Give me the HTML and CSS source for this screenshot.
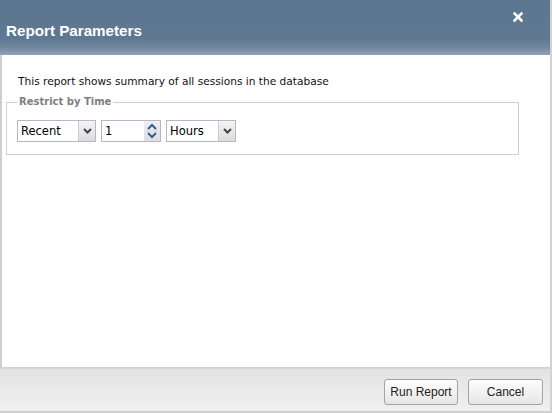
FILE: index.html
```html
<!DOCTYPE html>
<html>
<head>
<meta charset="utf-8">
<link rel="stylesheet" href="styles.css">
</head>
<body>
<div class="dialog">
  <div class="header">
    <span class="title">Report Parameters</span>
    <span class="close"><svg width="10" height="10" viewBox="0 0 10 10"><path d="M1.5 1.5 L8.5 8.5 M8.5 1.5 L1.5 8.5" stroke="#fff" stroke-width="2.6" stroke-linecap="square"/></svg></span>
  </div>
  <div class="body">
    <p class="desc">This report shows summary of all sessions in the database</p>
    <fieldset class="group">
      <legend>Restrict by Time</legend>
      <div class="controls">
        <div class="combo w-recent"><span class="val">Recent</span><span class="trigger"><svg width="9" height="6" viewBox="0 0 9 6"><path d="M1 1 L4.5 4.5 L8 1" fill="none" stroke="#444" stroke-width="2"/></svg></span></div>
        <div class="combo w-num"><span class="val">1</span><span class="spin"><svg width="14" height="20" viewBox="0 0 14 20"><path d="M3 8 L7 4 L11 8" fill="none" stroke="#2f5f95" stroke-width="2"/><path d="M3 12 L7 16 L11 12" fill="none" stroke="#2f5f95" stroke-width="2"/><path d="M1 10 H13" stroke="#d8dce4" stroke-width="1"/></svg></span></div>
        <div class="combo w-hours"><span class="val">Hours</span><span class="trigger"><svg width="9" height="6" viewBox="0 0 9 6"><path d="M1 1 L4.5 4.5 L8 1" fill="none" stroke="#444" stroke-width="2"/></svg></span></div>
      </div>
    </fieldset>
  </div>
  <div class="footer">
    <button class="btn btn-run">Run Report</button>
    <button class="btn btn-cancel">Cancel</button>
  </div>
</div>
</body>
</html>
```
FILE: styles.css
```css
html, body { margin: 0; padding: 0; background: #fff; }
.dialog {
  width: 550px;
  height: 411px;
  display: flex;
  flex-direction: column;
  border-right: 2px solid #d2d2d2;
  border-bottom: 2px solid #cfcfcf;
  font-family: "DejaVu Sans", Tahoma, sans-serif;
}
.header {
  height: 55px;
  flex: none;
  position: relative;
  background: linear-gradient(to bottom, #5d7790 0, #5e7891 38px, #6e869c 47px, #90a3b4 55px);
  display: flex;
  align-items: center;
  padding-left: 6px;
  padding-top: 5px;
  box-sizing: border-box;
}
.title {
  color: #fff;
  font-family: "Liberation Sans", Arial, sans-serif;
  font-weight: bold;
  font-size: 15.2px;
}
.close {
  position: absolute;
  right: 27px;
  top: 12px;
  width: 10px;
  height: 10px;
  display: flex;
}
.body {
  flex: 1;
  border-left: 2px solid #cfcfcf;
  border-bottom: 1px solid #d0d0d0;
  padding: 19px 0 0 4px;
}
.desc {
  margin: 0 0 0 12px;
  font-size: 10.6px;
  line-height: 14px;
  color: #111;
}
.group {
  margin: 7px 0 0 0;
  width: 513px;
  box-sizing: border-box;
  border: 1px solid #cfcfcf;
  padding: 11px 10px 12px 10px;
}
.group legend {
  margin-left: 0;
  padding: 0 2px;
  font-size: 10px;
  font-weight: bold;
  color: #7e7e7e;
  line-height: 14px;
}
.controls {
  display: flex;
  gap: 5px;
}
.combo {
  height: 22px;
  box-sizing: border-box;
  border: 1px solid #b5b8c8;
  background: #fff;
  display: flex;
  align-items: center;
  font-size: 11.5px;
  color: #000;
}
.val { flex: 1; padding-left: 3px; }
.w-recent { width: 79px; }
.w-num { width: 60px; }
.w-hours { width: 70px; }
.trigger {
  width: 16px;
  height: 100%;
  border-left: 1px solid #c9cbd6;
  background: linear-gradient(to bottom, #f4f4f4, #dcdcdc);
  display: flex;
  align-items: center;
  justify-content: center;
}
.spin {
  width: 16px;
  height: 100%;
  background: linear-gradient(to bottom, #f0f0f0, #dedede);
  display: flex;
  align-items: center;
  justify-content: center;
}
.footer {
  height: 43px;
  flex: none;
  box-sizing: border-box;
  border-top: 1px solid #d6d6d6;
  background: linear-gradient(to bottom, #e3e3e3, #f0f0f0);
  display: flex;
  justify-content: flex-end;
  align-items: center;
  gap: 10px;
  padding-right: 7px;
  padding-top: 4px;
}
.btn {
  height: 26px;
  width: 75px;
  padding: 0;
  border: 1px solid #a3a3a3;
  border-radius: 3px;
  background: linear-gradient(to bottom, #fdfdfd, #e6e6e6);
  font-family: "Liberation Sans", Arial, sans-serif;
  font-size: 12px;
  color: #222;
}
.btn-run { width: 74px; }
```
